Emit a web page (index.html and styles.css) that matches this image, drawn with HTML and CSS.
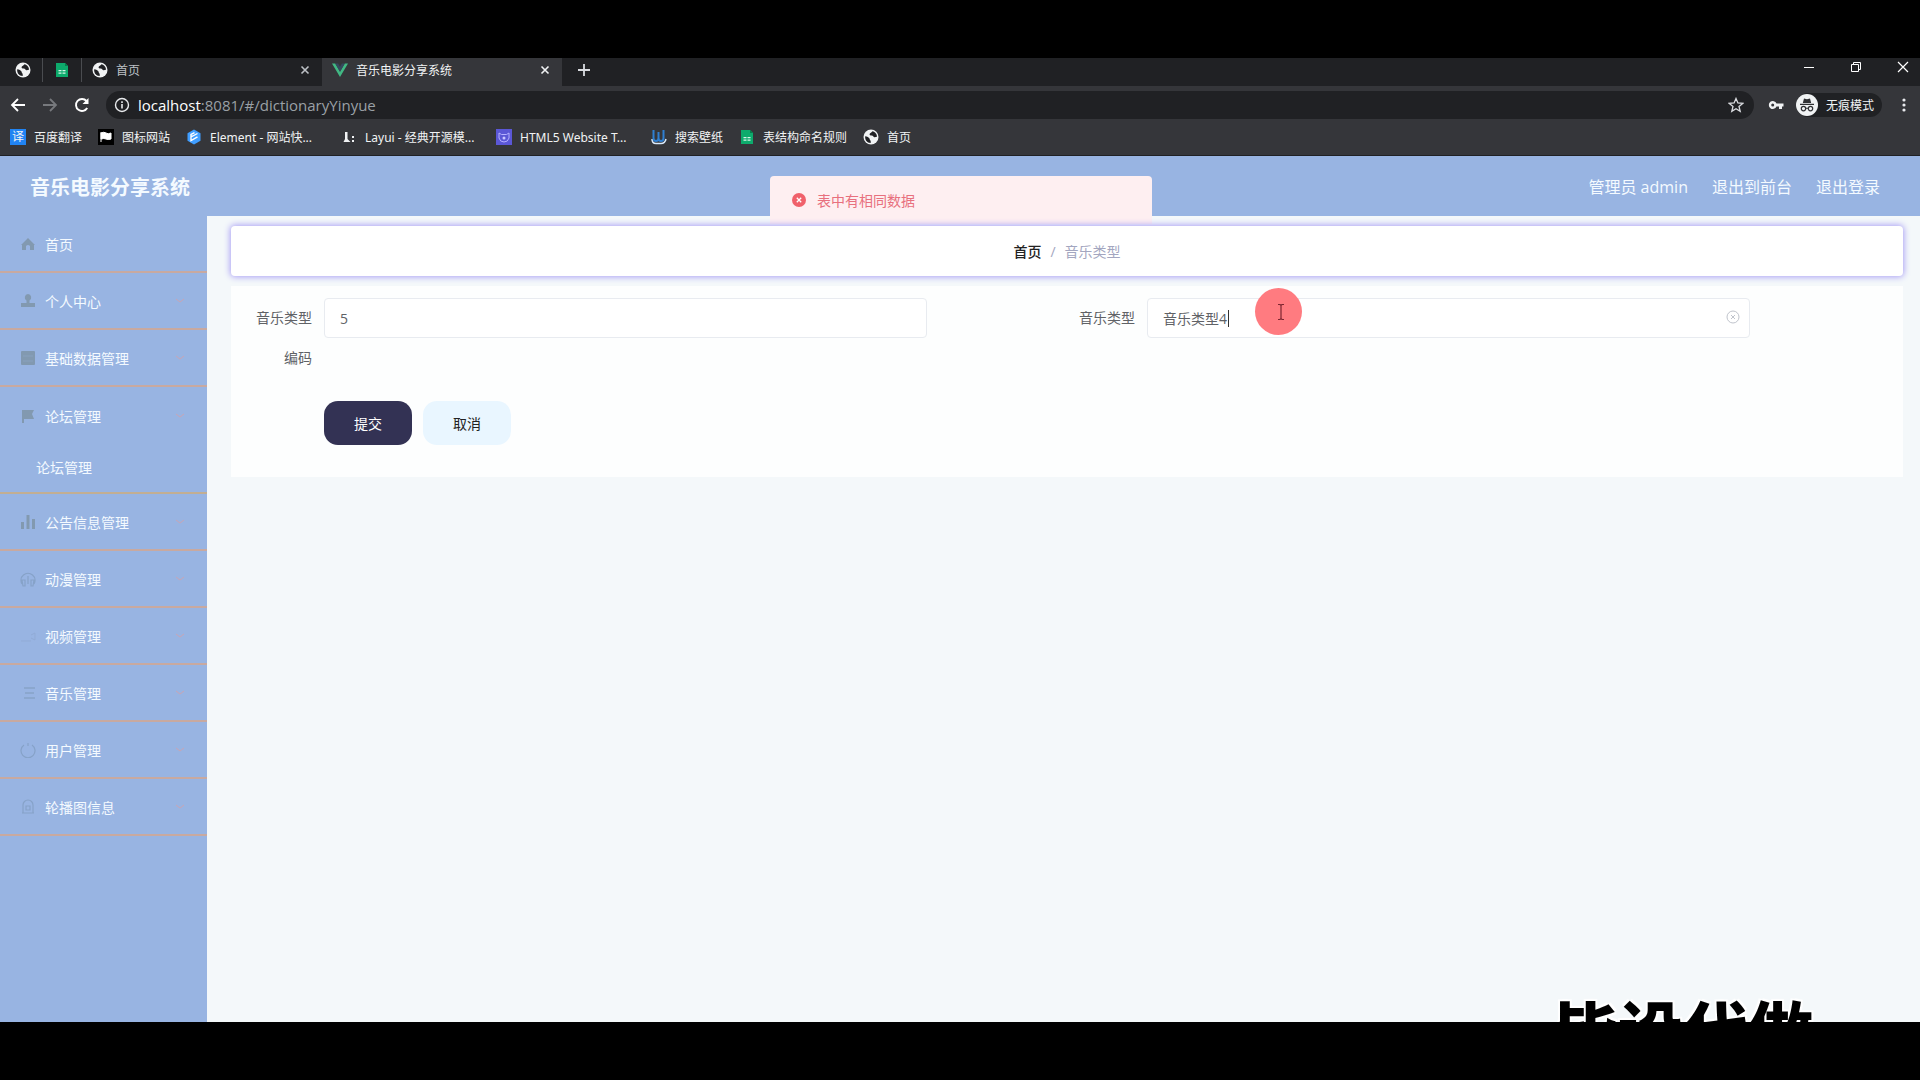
FILE: index.html
```html
<!DOCTYPE html>
<html lang="zh-CN">
	<head>
		<meta charset="utf-8">
		<title>音乐电影分享系统</title>
		<link rel="stylesheet" href="styles.css">
	</head>
	<body>
		<svg class="defs" width="0" height="0">
			<symbol id="globe" viewBox="0 0 16 16">
				<circle cx="8" cy="8" r="7.5" fill="#f1f3f4"/>
				<path d="M2.2 7.2c2 .2 3.6 1 4.300 2.300.5 1 .1 1.700 1.200 2.200v2.200C4.200 14 1.700 11 2.200 7.200zM9.500 2.300C8.800 3.800 7 3.700 6.600 5c-.3 1.100.9 1.500 2.200 1.500 1.300.1 1.500 1.600 2.800 1.700 1 .1 1.500-.6 2.400-.5.1-2.600-2-4.900-4.500-5.400z" fill="#202124"/>
			</symbol>
			<symbol id="sheet" viewBox="0 0 16 16">
				<path d="M2 1h9l3 3v11H2z" fill="#0dab6c"/>
				<path d="M11 1l3 3h-3z" fill="#077a4b"/>
				<path d="M4.500 8h3v1.300h-3zM8.500 8h3v1.300h-3zM4.500 10.500h3v1.300h-3zM8.500 10.500h3v1.300h-3z" fill="#d6f5e8"/>
			</symbol>
			<symbol id="cross" viewBox="0 0 10 10">
				<path d="M1.500 1.500l7 7M8.500 1.500l-7 7" stroke="currentColor" stroke-width="1.600"/>
			</symbol>
			<symbol id="arrow" viewBox="0 0 10 6">
				<path d="M1 1l4 3 4-3" fill="none" stroke="currentColor"/>
			</symbol>
		</svg>

		<div class="screen">
			<div class="tabs">
				<button class="pin" aria-label="首页"><svg class="fav"><use href="#globe"/></svg></button>
				<button class="pin" aria-label="表格"><svg class="fav"><use href="#sheet"/></svg></button>
				<div class="tab">
					<svg class="fav"><use href="#globe"/></svg>
					<span class="tab-title">首页</span>
					<button class="tab-close" aria-label="关闭"><svg width="10" height="10"><use href="#cross"/></svg></button>
				</div>
				<div class="tab active">
					<svg class="fav" viewBox="0 0 16 16"><path d="M0 1.500h3.200L8 9.800l4.800-8.300H16L8 15z" fill="#41b883"/><path d="M3.200 1.500h2.900L8 4.800l1.900-3.300h2.900L8 9.800z" fill="#35495e"/></svg>
					<span class="tab-title">音乐电影分享系统</span>
					<button class="tab-close" aria-label="关闭"><svg width="10" height="10"><use href="#cross"/></svg></button>
				</div>
				<button class="new-tab" aria-label="新标签页"><svg width="14" height="14" viewBox="0 0 14 14"><path d="M7 1v12M1 7h12" stroke="#dadce0" stroke-width="1.800"/></svg></button>
				<div class="window-buttons">
					<button aria-label="最小化"><svg width="12" height="12" viewBox="0 0 12 12"><path d="M1 6.500h10" stroke="#fff"/></svg></button>
					<button aria-label="还原"><svg width="12" height="12" viewBox="0 0 12 12"><path d="M1.500 3.500h7v7h-7zM3.500 3.500v-2h7v7h-2" fill="none" stroke="#fff"/></svg></button>
					<button aria-label="关闭"><svg width="12" height="12" viewBox="0 0 12 12"><path d="M1 1l10 10M11 1L1 11" stroke="#fff" stroke-width="1.200"/></svg></button>
				</div>
			</div>

			<div class="toolbar">
				<button class="nav" aria-label="后退"><svg width="16" height="16" viewBox="0 0 16 16"><path d="M15 8H2M8 2L2 8l6 6" fill="none" stroke="#fff" stroke-width="1.800"/></svg></button>
				<button class="nav" aria-label="前进"><svg width="16" height="16" viewBox="0 0 16 16"><path d="M1 8h13M8 2l6 6-6 6" fill="none" stroke="#77797d" stroke-width="1.800"/></svg></button>
				<button class="nav" aria-label="刷新"><svg width="16" height="16" viewBox="0 0 16 16"><path d="M13.200 11A6 6 0 1 1 12.500 4" fill="none" stroke="#fff" stroke-width="1.900"/><path d="M14.500 1v6h-6z" fill="#fff"/></svg></button>
				<div class="address">
					<svg width="16" height="16" viewBox="0 0 16 16"><circle cx="8" cy="8" r="6.500" fill="none" stroke="#e8eaed" stroke-width="1.400"/><path d="M7.200 7h1.600v4.500H7.200zM7.200 4.300h1.600v1.600H7.200z" fill="#e8eaed"/></svg>
					<span class="url"><b>localhost</b>:8081/#/dictionaryYinyue</span>
					<svg width="16" height="16" viewBox="0 0 16 16"><path d="M8 1.500l1.900 4.500 4.800.4-3.700 3.100 1.200 4.800L8 11.700l-4.200 2.600L5 9.500 1.300 6.400 6.100 6z" fill="none" stroke="#dadce0" stroke-width="1.300"/></svg>
				</div>
				<svg class="key" width="16" height="16" viewBox="0 0 16 16"><path d="M8.500 6.500a4 4 0 1 0 0 3H11V12h3V9.500h1.500v-3zM4.700 9.500a1.500 1.500 0 1 1 0-3 1.500 1.500 0 0 1 0 3z" fill="#f1f3f4"/></svg>
				<div class="incognito">
					<svg width="22" height="22" viewBox="0 0 22 22"><circle cx="11" cy="11" r="11" fill="#f1f3f4"/><path d="M8 4.500l3 .8 3-.8 1.200 4.500H6.800zM4 9.700h14v1.200H4z" fill="#303134"/><path d="M9.700 14.500q1.300-.8 2.600 0" fill="none" stroke="#303134"/><circle cx="7.500" cy="14.600" r="2.200" fill="none" stroke="#303134" stroke-width="1.200"/><circle cx="14.500" cy="14.600" r="2.200" fill="none" stroke="#303134" stroke-width="1.200"/></svg>
					<span>无痕模式</span>
				</div>
				<button class="more" aria-label="更多"><svg width="4" height="16" viewBox="0 0 4 16"><g fill="#e8eaed"><circle cx="2" cy="3" r="1.600"/><circle cx="2" cy="8" r="1.600"/><circle cx="2" cy="13" r="1.600"/></g></svg></button>
			</div>

			<nav class="bookmarks">
				<a href="#"><span class="fav fanyi">译</span>百度翻译</a>
				<a href="#"><svg class="fav" viewBox="0 0 16 16"><path d="M0 0h16v16H0z" fill="#000"/><path d="M3 3v10M3 4q3-1.500 5 0t5 0v6q-3 1-5 0t-5 0z" fill="#fff" stroke="#fff"/></svg>图标网站</a>
				<a class="long" href="#"><svg class="fav" viewBox="0 0 16 16"><path d="M8 .5l6.500 3.700v7.600L8 15.500l-6.500-3.700V4.200z" fill="#409eff"/><path d="M11.500 4.500L5 8v3.500l6.500-3.700M5 8V5.500L8.500 3.600" fill="none" stroke="#fff" stroke-width="1.400"/></svg>Element - 网站快...</a>
				<a class="long" href="#"><svg class="fav" viewBox="0 0 16 16"><path d="M4 3h2.500v7l3 3H2.500L4 10zM11 7h2v2h-2zM11 11h2v2h-2z" fill="#f1f3f4"/></svg>Layui - 经典开源模...</a>
				<a class="long" href="#"><svg class="fav" viewBox="0 0 16 16"><path d="M0 0h16v16H0z" fill="#5b57d6"/><path d="M3 4l2.500 1.500h5L13 4v5q-1 4-5 4T3 9z" fill="none" stroke="#b5b0ff"/><circle cx="8" cy="9" r="1.500" fill="#c9c5ff"/></svg>HTML5 Website T...</a>
				<a href="#"><svg class="fav" viewBox="0 0 16 16"><path d="M1 10q0 4.500 4 4.500h5q4 0 5-4.500" fill="none" stroke="#d9e9fa" stroke-width="1.500"/><path d="M2.500 1v8q0 3 2.500 3t2.500-3V3v6q0 3 2.500 3t2.500-3V1" fill="none" stroke="#2f7fd1" stroke-width="2"/></svg>搜索壁纸</a>
				<a href="#"><svg class="fav"><use href="#sheet"/></svg>表结构命名规则</a>
				<a href="#"><svg class="fav"><use href="#globe"/></svg>首页</a>
			</nav>

			<div class="app">
				<header class="header">
					<h1>音乐电影分享系统</h1>
					<span>管理员 admin</span>
					<a href="#">退出到前台</a>
					<a href="#">退出登录</a>
				</header>
				<div class="content">
					<aside class="sidebar">
						<a class="item" href="#"><svg class="icon" viewBox="0 0 16 16"><path d="M8 2L1 9h1v5h4v-4q2-2 4 0v4h4V9h1z" fill="currentColor"/></svg>首页</a>
						<a class="item" href="#"><svg class="icon" viewBox="0 0 16 16"><path d="M8 1a3.500 3.500 0 0 1 1.500 6.500V10H15v4H1v-4h5.500V7.500A3.500 3.500 0 0 1 8 1z" fill="currentColor"/></svg>个人中心<svg class="arrow"><use href="#arrow"/></svg></a>
						<a class="item" href="#"><svg class="icon" viewBox="0 0 16 16"><rect x="1" y="1" width="14" height="14" rx="1" fill="currentColor"/><path d="M3 6h10M3 11h10" stroke="#98b4e2" stroke-opacity=".3"/></svg>基础数据管理<svg class="arrow"><use href="#arrow"/></svg></a>
						<div class="group">
							<a class="item" href="#"><svg class="icon" viewBox="0 0 16 16"><path d="M2 2h12l-2 4 2 5H4v4H2z" fill="currentColor"/></svg>论坛管理<svg class="arrow"><use href="#arrow"/></svg></a>
							<a class="sub" href="#">论坛管理</a>
						</div>
						<a class="item" href="#"><svg class="icon" viewBox="0 0 16 16"><path d="M1 8h3v7H1zM6.500 1h3v14h-3zM12 5h3v10h-3z" fill="currentColor"/></svg>公告信息管理<svg class="arrow"><use href="#arrow"/></svg></a>
						<a class="item" href="#"><svg class="icon faint" viewBox="0 0 16 16"><path d="M2 13a7 7 0 1 1 12 0M2 9h3v6H3zM14 9h-3v6h2zM8 5v8" fill="none" stroke="currentColor" stroke-width="1.200"/></svg>动漫管理<svg class="arrow"><use href="#arrow"/></svg></a>
						<a class="item" href="#"><svg class="icon fainter" viewBox="0 0 16 16"><path d="M1 13h10M11 7l4-2v7l-4-2" fill="none" stroke="currentColor"/></svg>视频管理<svg class="arrow"><use href="#arrow"/></svg></a>
						<a class="item" href="#"><svg class="icon faint" viewBox="0 0 16 16"><path d="M4 3h11M5 8h9M4 13h11" stroke="currentColor" stroke-width="1.500"/></svg>音乐管理<svg class="arrow"><use href="#arrow"/></svg></a>
						<a class="item" href="#"><svg class="icon faint" viewBox="0 0 16 16"><path d="M4 3a7 7 0 1 0 8 0M8 1v3" fill="none" stroke="currentColor" stroke-width="1.200"/></svg>用户管理<svg class="arrow"><use href="#arrow"/></svg></a>
						<a class="item" href="#"><svg class="icon faint" viewBox="0 0 16 16"><path d="M2 14h12M3 14V6a5 5 0 0 1 10 0v8M6 11V7h4v4z" fill="none" stroke="currentColor" stroke-width="1.200"/></svg>轮播图信息<svg class="arrow"><use href="#arrow"/></svg></a>
					</aside>

					<main class="main">
						<nav class="breadcrumb">
							<a href="#">首页</a><i>/</i><span>音乐类型</span>
						</nav>
						<form class="card">
							<div class="row">
								<div class="field">
									<label for="code">音乐类型编码</label>
									<div class="input-box"><input id="code" type="text" value="5"></div>
								</div>
								<div class="field">
									<label for="type">音乐类型</label>
									<div class="input-box">
										<input id="type" type="text" value="音乐类型4">
										<span class="caret"></span>
										<svg class="clear" viewBox="0 0 14 14"><circle cx="7" cy="7" r="6" fill="none" stroke="currentColor"/><path d="M5 5l4 4M9 5L5 9" stroke="currentColor"/></svg>
										<span class="pointer">
											<svg width="10" height="18" viewBox="0 0 10 18"><path d="M2 1.500h2l1 1 1-1h2M5 2v14M2 16.500h2l1-1 1 1h2" fill="none" stroke="#7d2630" stroke-width="1.200"/></svg>
										</span>
									</div>
								</div>
							</div>
							<div class="buttons">
								<button class="submit" type="button">提交</button>
								<button class="cancel" type="button">取消</button>
							</div>
						</form>
					</main>
				</div>
				<div class="message" role="alert">
					<svg width="14" height="14" viewBox="0 0 14 14"><circle cx="7" cy="7" r="7" fill="#f0616b"/><path d="M4.800 4.800l4.400 4.400M9.200 4.800L4.800 9.200" stroke="#fff" stroke-width="1.300"/></svg>
					表中有相同数据
				</div>
				<div class="watermark">毕设代做</div>
			</div>
		</div>
	</body>
</html>
```
FILE: styles.css
```css
* {
	box-sizing: border-box;
}

body {
	margin: 0;
	height: 100vh;
	padding: 58px 0;
	background: #000;
	font-family: "Open Sans", "Noto Sans CJK SC", sans-serif;
	font-size: 14px;
	overflow: hidden;
}

a {
	color: inherit;
	text-decoration: none;
}

button {
	border: 0;
	padding: 0;
	background: none;
	color: inherit;
	font: inherit;
}

svg {
	display: block;
	flex-shrink: 0;
}

.defs {
	position: absolute;
}

.screen {
	height: 100%;
	display: flex;
	flex-direction: column;
}

/* browser window */

.tabs {
	height: 28px;
	display: flex;
	padding-left: 4px;
	background: #202124;
	color: #bdc1c6;
	font-size: 12px;
}

.fav {
	width: 16px;
	height: 16px;
	flex-shrink: 0;
}

.pin {
	width: 39px;
	height: 24px;
	display: flex;
	align-items: center;
	justify-content: center;
	border-right: 1px solid #4a4c50;
}

.tab {
	width: 240px;
	height: 24px;
	display: flex;
	align-items: center;
	gap: 8px;
	padding: 0 12px 0 10px;
}

.tab.active {
	height: 28px;
	padding-bottom: 4px;
	background: #35363a;
	color: #f1f3f4;
}

.tab-title {
	flex: 1;
}

.new-tab {
	height: 24px;
	padding: 0 15px;
}

.window-buttons {
	display: flex;
	align-items: center;
	gap: 35px;
	height: 18px;
	margin-left: auto;
	padding-right: 11px;
}

.toolbar {
	height: 38px;
	display: flex;
	align-items: center;
	padding: 0 0 1px 10px;
	background: #35363a;
	color: #f1f3f4;
}

.nav {
	width: 32px;
}

.address {
	flex: 1;
	height: 28px;
	display: flex;
	align-items: center;
	gap: 8px;
	padding: 0 10px 0 8px;
	border-radius: 14px;
	background: #202124;
}

.url {
	flex: 1;
	color: #9aa0a6;
	font-size: 15px;
}

.url b {
	color: #fff;
	font-weight: normal;
}

.key {
	margin: 0 12px 0 14px;
}

.incognito {
	height: 24px;
	display: flex;
	align-items: center;
	gap: 8px;
	margin-right: 20px;
	padding-right: 8px;
	border-radius: 12px;
	background: #202124;
	font-size: 12px;
}

.more {
	margin-right: 14px;
}

.bookmarks {
	height: 32px;
	display: flex;
	align-items: center;
	gap: 16px;
	padding: 0 10px 5px;
	border-bottom: 1px solid #202124;
	background: #35363a;
	color: #f1f3f4;
	font-family: "Noto Sans", "Noto Sans CJK SC", sans-serif;
	font-size: 12px;
}

.bookmarks a {
	display: flex;
	align-items: center;
	gap: 8px;
	white-space: nowrap;
}

.bookmarks .long {
	width: 139px;
}

.fanyi {
	background: #2184f3;
	line-height: 16px;
	text-align: center;
}

/* page */

.app {
	position: relative;
	flex: 1;
	min-height: 0;
	display: flex;
	flex-direction: column;
	overflow: hidden;
	background: #f4f8fa;
}

.header {
	height: 60px;
	display: flex;
	align-items: center;
	gap: 24px;
	padding: 0 40px 0 30px;
	background: #98b4e2;
	color: #f4faff;
	font-size: 16px;
}

.header h1 {
	flex: 1;
	margin: 0;
	font-size: 20px;
}

.content {
	flex: 1;
	display: flex;
}

.sidebar {
	width: 207px;
	background: #98b4e2;
	color: #f4faff;
}

.item {
	height: 57px;
	display: flex;
	align-items: center;
	gap: 9px;
	padding: 0 22px 0 20px;
	border-bottom: 2px solid #c8a9a0;
}

.icon {
	width: 16px;
	height: 16px;
	color: #8299b0;
}

.icon.faint {
	color: #86a2c8;
}

.icon.fainter {
	color: #91abd6;
}

.arrow {
	width: 10px;
	height: 6px;
	margin-left: auto;
	color: #c9a5b4;
}

.group {
	border-bottom: 2px solid #c2ae92;
}

.group .item {
	border-bottom: 0;
}

.sub {
	display: block;
	height: 48px;
	padding-left: 36px;
	line-height: 48px;
}

.main {
	flex: 1;
	padding: 10px 17px 0 24px;
}

.breadcrumb {
	position: relative;
	z-index: 2;
	height: 50px;
	display: flex;
	align-items: center;
	justify-content: center;
	margin-bottom: 10px;
	border-radius: 4px;
	background: #fff;
	box-shadow: 0 0 6px 1px #a99ff5;
	color: #a3a6c0;
}

.breadcrumb a {
	color: #222;
	font-weight: 500;
}

.breadcrumb i {
	margin: 0 9px;
	font-style: normal;
}

.card {
	padding: 12px 13px 32px;
	background: #fdfefe;
}

.row {
	display: flex;
	margin-bottom: 23px;
}

.field {
	flex: 1;
	display: flex;
	align-items: flex-start;
	padding-right: 140px;
}

.field label {
	width: 80px;
	padding-right: 12px;
	color: #606266;
	line-height: 40px;
	text-align: right;
}

.input-box {
	position: relative;
	flex: 1;
}

.input-box input {
	display: block;
	width: 100%;
	height: 40px;
	padding: 0 15px;
	border: 1px solid #e8ebf0;
	border-radius: 4px;
	background: #fff;
	color: #606266;
	font: inherit;
	outline: 0;
}

.caret {
	position: absolute;
	left: 81px;
	top: 12px;
	width: 1px;
	height: 17px;
	background: #333;
}

.clear {
	position: absolute;
	right: 10px;
	top: 12px;
	width: 14px;
	height: 14px;
	color: #c0c4cc;
}

.pointer {
	position: absolute;
	left: 108px;
	top: -10px;
	width: 47px;
	height: 47px;
	display: flex;
	align-items: center;
	justify-content: center;
	padding-left: 4px;
	border-radius: 50%;
	background: #ff7b80;
}

.buttons {
	display: flex;
	gap: 11px;
	padding-left: 80px;
}

.buttons button {
	width: 88px;
	height: 44px;
	border-radius: 14px;
}

.submit {
	background: #333254;
	color: #fff;
}

.cancel {
	background: #e9f6ff;
	color: #222;
}

.message {
	position: absolute;
	z-index: 1;
	left: 50%;
	top: 20px;
	width: 382px;
	height: 48px;
	display: flex;
	align-items: center;
	gap: 11px;
	margin-left: -190px;
	padding-left: 22px;
	border-radius: 4px 4px 0 0;
	background: #feeff1;
	color: #e8707e;
}

.watermark {
	position: absolute;
	right: 107px;
	bottom: -44px;
	color: #000;
	font-family: "Noto Sans CJK SC", sans-serif;
	font-size: 65px;
	font-weight: 900;
	line-height: 76px;
	text-shadow: -2px -2px 1px #fff, 2px -2px 1px #fff, 2px 2px 1px #fff;
}
```
